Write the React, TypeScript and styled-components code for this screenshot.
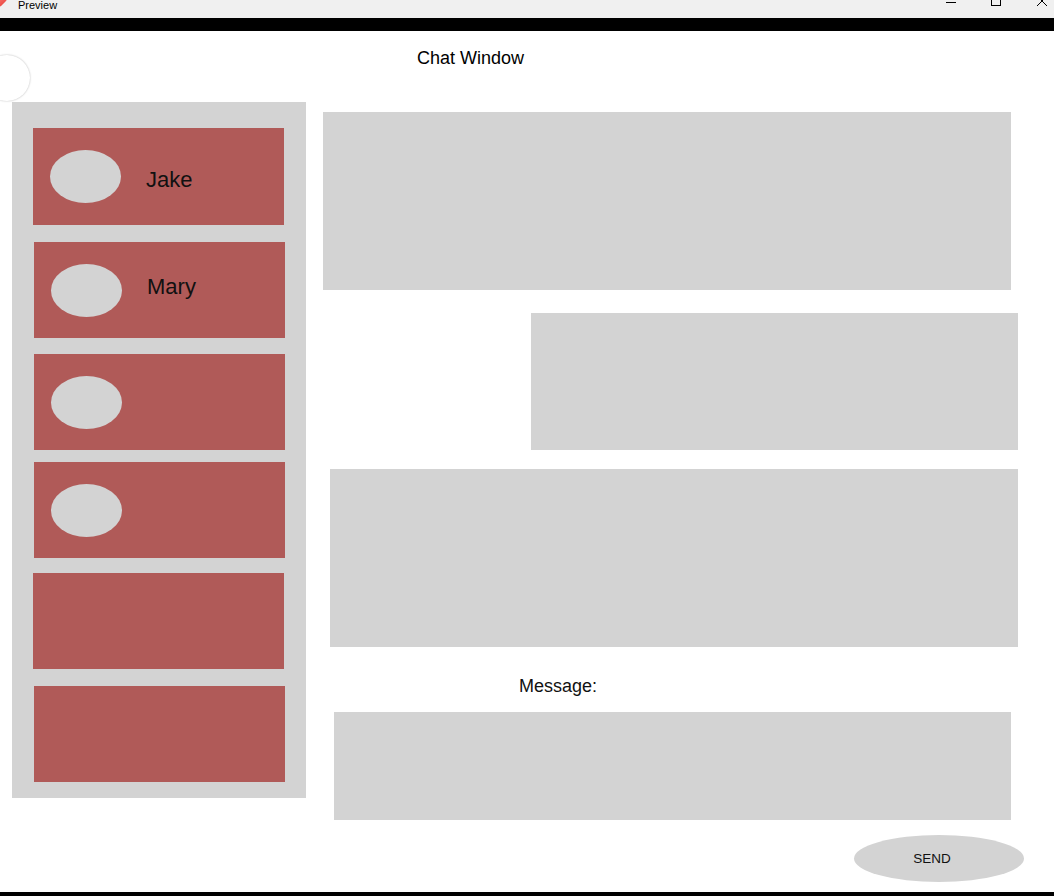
import React from "react";
import styled, { createGlobalStyle } from "styled-components";

const GlobalStyle = createGlobalStyle`
  html, body { margin: 0; padding: 0; background: #ffffff; }
  body { font-family: "Liberation Sans", Arial, sans-serif; color: #000; }
  * { box-sizing: border-box; }
`;

const Page = styled.div`
  position: relative;
  min-height: 100vh;
  display: flex;
  flex-direction: column;
  overflow: hidden;
`;

const TitleBar = styled.div`
  height: 18px;
  background: #f0f0f0;
  display: flex;
  align-items: flex-start;
  overflow: hidden;
`;

const AppIcon = styled.svg`
  width: 13px;
  height: 12px;
  margin-left: -6px;
  margin-top: -5px;
  flex: none;
`;

const TitleText = styled.span`
  font-family: "Liberation Sans", Arial, sans-serif;
  font-size: 11px;
  line-height: 12px;
  margin-left: 11px;
  margin-top: -1px;
  color: #000;
`;

const Controls = styled.div`
  margin-left: auto;
  display: flex;
  padding-right: 7px;
`;

const ControlIcon = styled.svg<{ $gap: number }>`
  width: 10px;
  height: 18px;
  margin-left: ${(p) => p.$gap}px;
  overflow: visible;
`;

const BlackBar = styled.div<{ $h: number }>`
  height: ${(p) => p.$h}px;
  background: #000;
  flex: none;
`;

const Footer = styled(BlackBar)`
  margin-top: auto;
`;

const FloatingCircle = styled.div`
  position: absolute;
  left: -16px;
  top: 55px;
  width: 46px;
  height: 46px;
  border-radius: 50%;
  background: #fff;
  box-shadow: 0 0 2px rgba(0, 0, 0, 0.3);
`;

const Header = styled.h1`
  margin: 0;
  padding: 17px 0 0 417px;
  font-size: 18px;
  line-height: 21px;
  font-weight: normal;
  color: #000;
`;

const Main = styled.div`
  display: flex;
  align-items: flex-start;
  padding-left: 12px;
  margin-top: 33px;
`;

const Sidebar = styled.div`
  width: 294px;
  height: 696px;
  background: #d3d3d3;
  padding: 26px 0 0 21px;
  display: flex;
  flex-direction: column;
  flex: none;
`;

const ContactCard = styled.div<{ $h: number; $mt: number; $shift: number }>`
  width: 251px;
  height: ${(p) => p.$h}px;
  margin-top: ${(p) => p.$mt}px;
  margin-left: ${(p) => p.$shift}px;
  background: #b05a58;
  display: flex;
  align-items: center;
  flex: none;
`;

const Avatar = styled.div`
  width: 71px;
  height: 53px;
  border-radius: 50%;
  background: #d3d3d3;
  margin-left: 17px;
  flex: none;
`;

const Name = styled.span<{ $dy: number }>`
  font-size: 22px;
  line-height: 26px;
  margin-left: 25px;
  position: relative;
  top: ${(p) => p.$dy}px;
  color: #111;
`;

const ChatColumn = styled.div`
  margin-left: 17px;
  display: flex;
  flex-direction: column;
  align-items: flex-start;
`;

const Bubble = styled.div<{ $w: number; $h: number; $mt: number; $ml: number }>`
  width: ${(p) => p.$w}px;
  height: ${(p) => p.$h}px;
  margin-top: ${(p) => p.$mt}px;
  margin-left: ${(p) => p.$ml}px;
  background: #d3d3d3;
  flex: none;
`;

const MessageLabel = styled.label`
  margin: 29px 0 0 196px;
  font-size: 18px;
  line-height: 21px;
  color: #111;
`;

const MessageInput = styled.div`
  width: 677px;
  height: 108px;
  margin: 15px 0 0 11px;
  background: #d3d3d3;
`;

const SendButton = styled.button`
  width: 170px;
  height: 47px;
  margin: 15px 0 0 531px;
  border: none;
  border-radius: 50%;
  background: #d3d3d3;
  font-family: "Liberation Sans", Arial, sans-serif;
  font-size: 13.5px;
  color: #111;
  padding: 0 14px 0 0;
  cursor: pointer;
`;

const contacts = [
  { name: "Jake", avatar: true, h: 97, mt: 0, shift: 0, dy: 3 },
  { name: "Mary", avatar: true, h: 96, mt: 17, shift: 1, dy: -3 },
  { name: "", avatar: true, h: 96, mt: 16, shift: 1, dy: 0 },
  { name: "", avatar: true, h: 96, mt: 12, shift: 1, dy: 0 },
  { name: "", avatar: false, h: 96, mt: 15, shift: 0, dy: 0 },
  { name: "", avatar: false, h: 96, mt: 17, shift: 1, dy: 0 },
];

export default function App() {
  return (
    <Page>
      <GlobalStyle />
      <TitleBar>
        <AppIcon viewBox="0 0 13 12">
          <defs>
            <linearGradient id="hg" x1="0" y1="0" x2="1" y2="1">
              <stop offset="0" stopColor="#ff8a80" />
              <stop offset="1" stopColor="#e53935" />
            </linearGradient>
          </defs>
          <path
            d="M6.5 11.5 L1 6 C-0.6 4.2 0.3 1 3 1 C4.6 1 5.8 2 6.5 3.2 C7.2 2 8.4 1 10 1 C12.7 1 13.6 4.2 12 6 Z"
            fill="url(#hg)"
          />
        </AppIcon>
        <TitleText>Preview</TitleText>
        <Controls>
          <ControlIcon $gap={0} viewBox="0 0 10 18">
            <line x1="0" y1="2.5" x2="10" y2="2.5" stroke="#000" strokeWidth="1" />
          </ControlIcon>
          <ControlIcon $gap={35} viewBox="0 0 10 18">
            <rect x="0.5" y="-4.5" width="9" height="10" fill="none" stroke="#000" strokeWidth="1" />
          </ControlIcon>
          <ControlIcon $gap={36} viewBox="0 0 10 18">
            <path d="M0 -4 L10 6 M10 -4 L0 6" stroke="#000" strokeWidth="1" />
          </ControlIcon>
        </Controls>
      </TitleBar>
      <BlackBar $h={13} />
      <FloatingCircle />
      <Header>Chat Window</Header>
      <Main>
        <Sidebar>
          {contacts.map((c, i) => (
            <ContactCard key={i} $h={c.h} $mt={c.mt} $shift={c.shift}>
              {c.avatar && <Avatar />}
              {c.name && <Name $dy={c.dy}>{c.name}</Name>}
            </ContactCard>
          ))}
        </Sidebar>
        <ChatColumn>
          <Bubble $w={688} $h={178} $mt={10} $ml={0} />
          <Bubble $w={487} $h={137} $mt={23} $ml={208} />
          <Bubble $w={688} $h={178} $mt={19} $ml={7} />
          <MessageLabel>Message:</MessageLabel>
          <MessageInput />
          <SendButton>SEND</SendButton>
        </ChatColumn>
      </Main>
      <Footer $h={4} />
    </Page>
  );
}
